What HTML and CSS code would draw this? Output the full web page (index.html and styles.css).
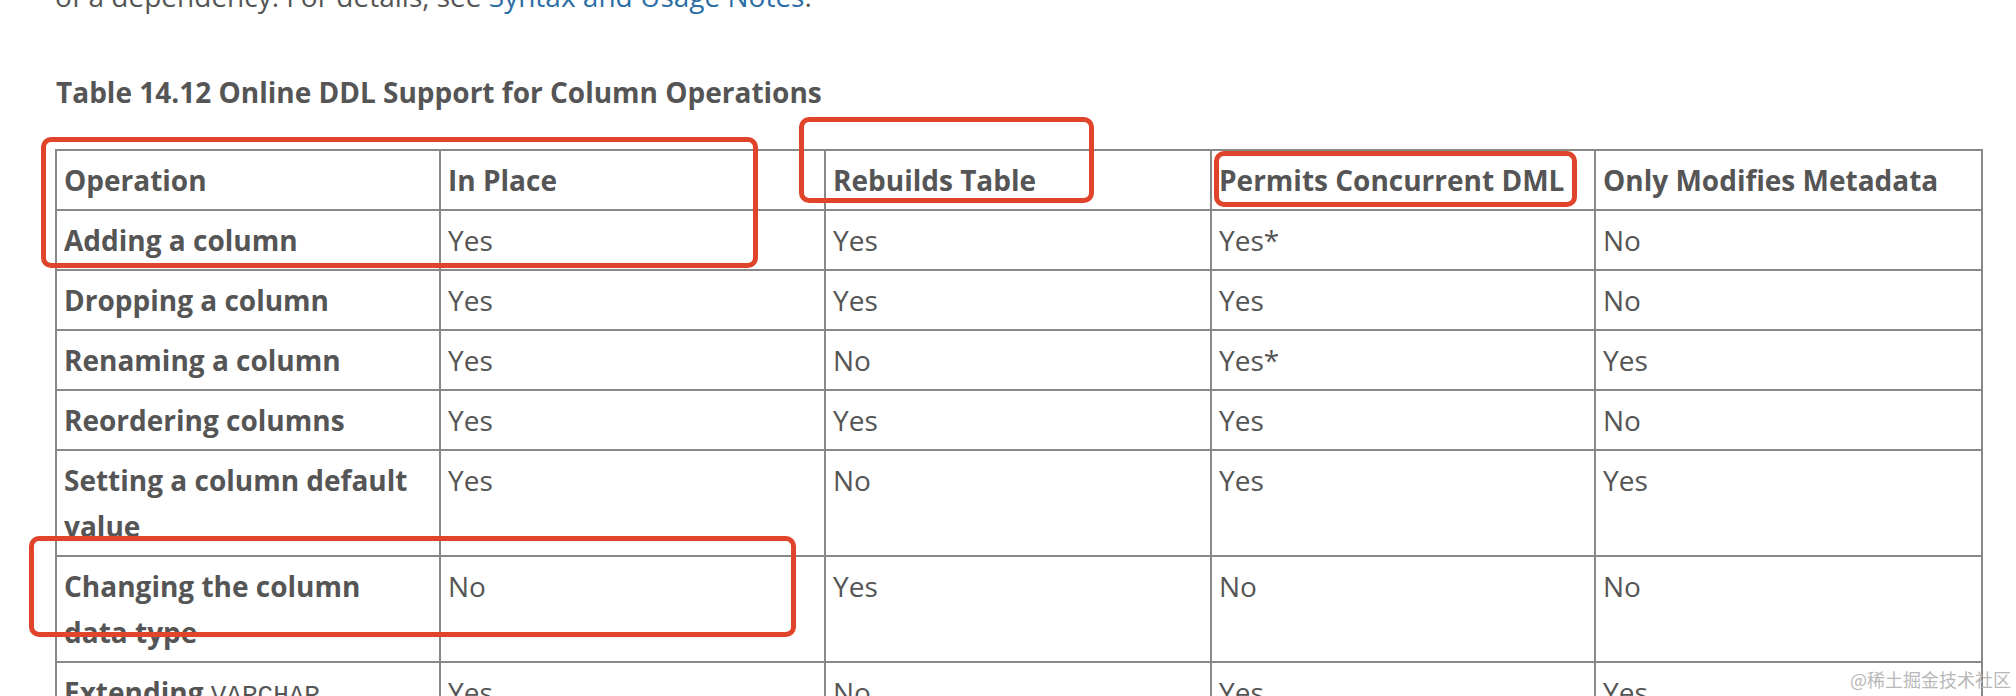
FILE: index.html
```html
<!DOCTYPE html>
<html>
<head>
<meta charset="utf-8">
<link rel="stylesheet" href="styles.css">
</head>
<body>
<div class="page">
  <p class="intro">of a dependency. For details, see <a href="#">Syntax and Usage Notes</a>.</p>
  <p class="caption">Table 14.12 Online DDL Support for Column Operations</p>
  <table class="ddl">
    <colgroup>
      <col class="c1"><col class="c2"><col class="c3"><col class="c4"><col class="c5">
    </colgroup>
    <thead>
      <tr><th>Operation</th><th>In Place</th><th>Rebuilds Table</th><th>Permits Concurrent DML</th><th>Only Modifies Metadata</th></tr>
    </thead>
    <tbody>
      <tr><th>Adding a column</th><td>Yes</td><td>Yes</td><td>Yes*</td><td>No</td></tr>
      <tr><th>Dropping a column</th><td>Yes</td><td>Yes</td><td>Yes</td><td>No</td></tr>
      <tr><th>Renaming a column</th><td>Yes</td><td>No</td><td>Yes*</td><td>Yes</td></tr>
      <tr><th>Reordering columns</th><td>Yes</td><td>Yes</td><td>Yes</td><td>No</td></tr>
      <tr><th>Setting a column default value</th><td>Yes</td><td>No</td><td>Yes</td><td>Yes</td></tr>
      <tr><th>Changing the column data type</th><td>No</td><td>Yes</td><td>No</td><td>No</td></tr>
      <tr><th>Extending <code>VARCHAR</code> column size</th><td>Yes</td><td>No</td><td>Yes</td><td>Yes</td></tr>
    </tbody>
  </table>
</div>
<div class="mark mark-1"></div>
<div class="mark mark-2"></div>
<div class="mark mark-3"></div>
<div class="mark mark-4"></div>
<div class="watermark">@稀土掘金技术社区</div>
</body>
</html>
```
FILE: styles.css
```css
html, body {
  margin: 0;
  padding: 0;
  background: #fff;
  overflow: hidden;
}
body {
  width: 2016px;
  height: 696px;
  position: relative;
  font-family: "Open Sans", "Noto Sans", sans-serif;
  color: #555;
}
.page {
  padding-left: 55px;
}
.intro {
  margin: -27px 0 0 0;
  font-size: 28px;
  line-height: 46px;
}
.intro a {
  color: #2b6ea5;
  text-decoration: none;
}
.caption {
  margin: 50px 0 0 1px;
  font-size: 28px;
  font-weight: 700;
  line-height: 46px;
}
.ddl {
  margin-top: 34px;
  margin-left: 0;
  border-collapse: collapse;
  table-layout: fixed;
  width: 1926px;
  font-size: 28px;
  line-height: 46px;
}
.c1 { width: 384px; }
.c2 { width: 385px; }
.c3 { width: 386px; }
.c4 { width: 384px; }
.c5 { width: 387px; }
.ddl th, .ddl td {
  border: 2px solid #888;
  padding: 6px 12px 6px 7px;
  text-align: left;
  vertical-align: top;
}
.ddl th {
  font-weight: 700;
}
.ddl td {
  font-weight: 400;
}
.ddl code {
  font-family: "Liberation Mono", monospace;
  font-size: 26px;
  font-weight: 400;
}
.mark {
  position: absolute;
  border: 5px solid #e0442b;
  border-radius: 10px;
  box-sizing: border-box;
}
.mark-1 { left: 41px; top: 137px; width: 717px; height: 131px; }
.mark-2 { left: 799px; top: 117px; width: 295px; height: 86px; }
.mark-3 { left: 1214px; top: 151px; width: 363px; height: 56px; }
.mark-4 { left: 29px; top: 536px; width: 767px; height: 101px; }
.watermark {
  position: absolute;
  left: 1850px;
  top: 668px;
  font-family: "Noto Sans CJK SC", sans-serif;
  font-size: 18px;
  line-height: 22px;
  color: #b8b8b8;
}
```
